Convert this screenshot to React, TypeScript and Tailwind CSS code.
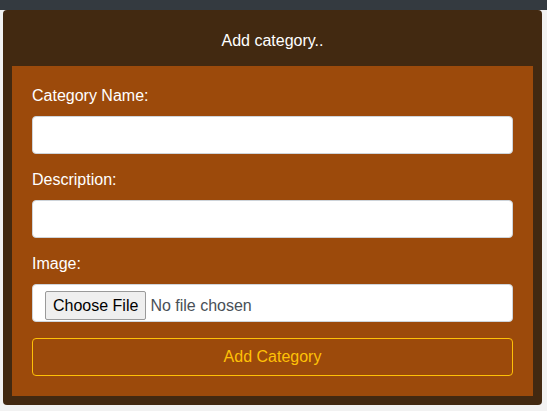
export default function App() {
  return (
    <div className="min-h-screen bg-[#f2f2f2] font-['Liberation_Sans',Arial,sans-serif] text-base">
      <div className="h-[10px] bg-[#343a40]" />
      <div className="mx-[3px] mr-[5px] rounded-[4px] bg-[#422911] px-[9px] pb-[9px]">
        <h1 className="flex h-[56px] items-center justify-center pt-[6px] text-base text-white">
          Add category..
        </h1>
        <form className="bg-[#9c4a0b] px-[20px] pt-[18px] pb-[20px]">
          <div className="mb-[14px]">
            <label className="mb-2 block leading-6 text-white">Category Name:</label>
            <input
              type="text"
              className="block h-[38px] w-full rounded-[4px] border border-[#ced4da] bg-white px-3"
            />
          </div>
          <div className="mb-[14px]">
            <label className="mb-2 block leading-6 text-white">Description:</label>
            <input
              type="text"
              className="block h-[38px] w-full rounded-[4px] border border-[#ced4da] bg-white px-3"
            />
          </div>
          <div className="mb-4">
            <label className="mb-2 block leading-6 text-white">Image:</label>
            <input
              type="file"
              className="block h-[38px] w-full rounded-[4px] border border-[#ced4da] bg-white px-3 pt-[6px] text-[#495057] file:mr-[4px] file:h-[29px] file:rounded-[2px] file:border file:border-[#9a9a9a] file:bg-[#efefef] file:px-[7px] file:text-black"
            />
          </div>
          <button
            type="button"
            className="block h-[38px] w-full rounded-[4px] border border-[#ffc107] text-[#ffc107]"
          >
            Add Category
          </button>
        </form>
      </div>
    </div>
  );
}
